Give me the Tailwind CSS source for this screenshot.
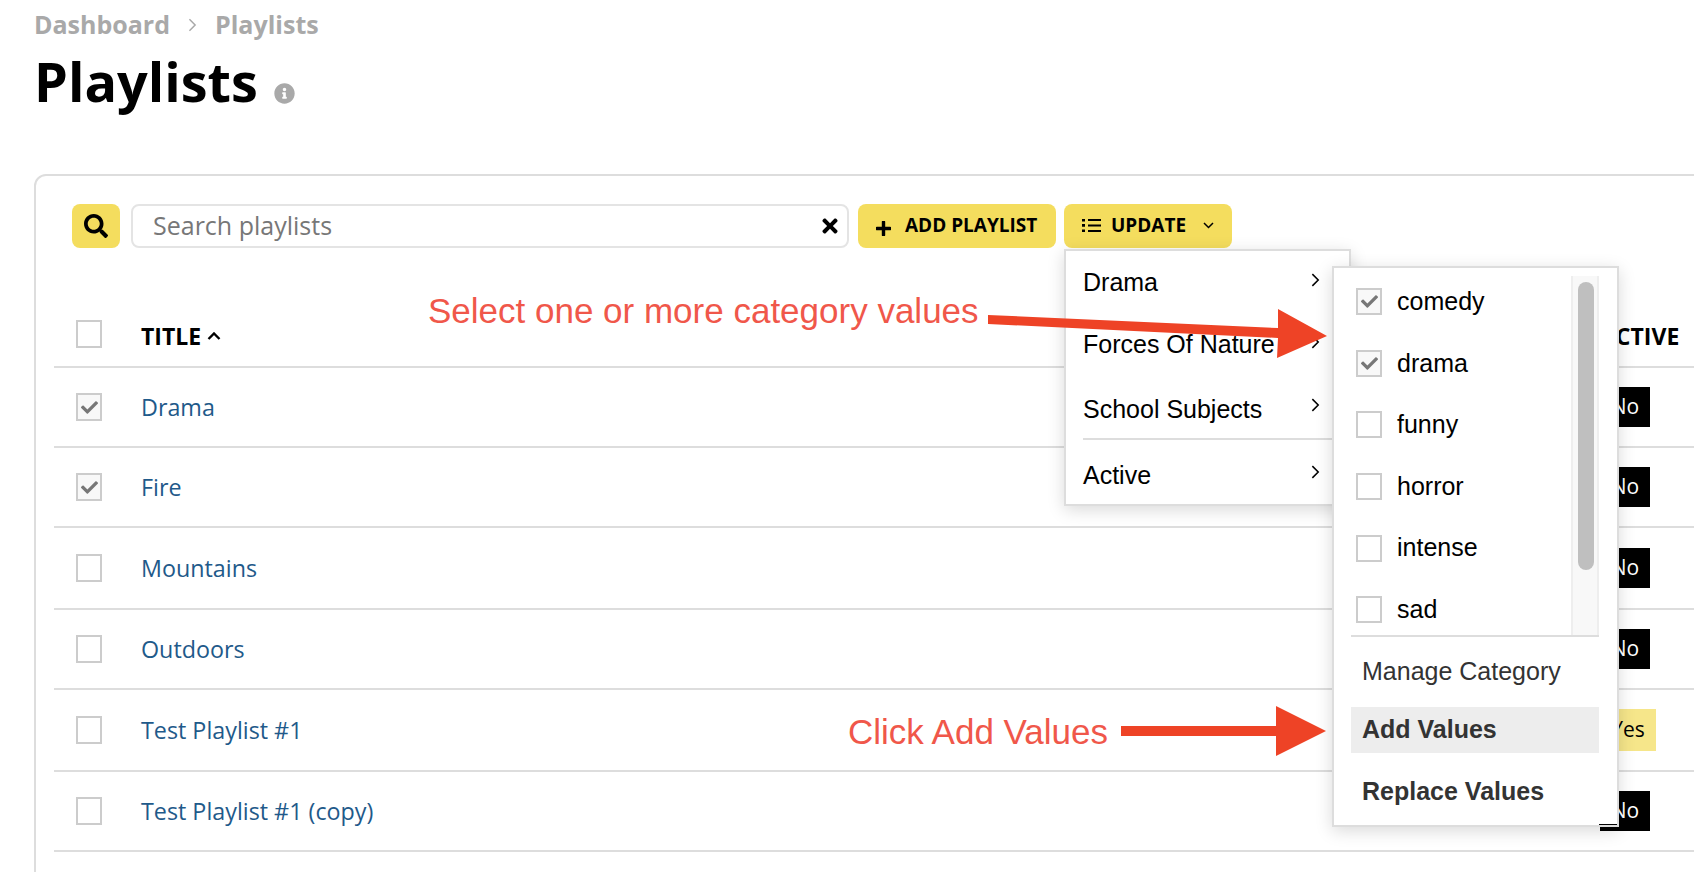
<!DOCTYPE html>
<html lang="en">
<head>
    <meta charset="UTF-8">
    <meta name="viewport" content="width=device-width, initial-scale=1.0">
    <title>Playlists</title>
    <script src="https://cdn.jsdelivr.net/npm/@tailwindcss/browser@4"></script>
</head>
<body class="relative h-[872px] overflow-hidden bg-white font-['Open_Sans',sans-serif] text-black">
    <svg class="hidden">
        <symbol id="check" viewBox="0 0 512 512"><path fill="currentColor" d="M173.898 439.404l-166.4-166.4c-9.997-9.997-9.997-26.206 0-36.204l36.203-36.204c9.997-9.998 26.207-9.998 36.204 0L192 312.69 432.095 72.596c9.997-9.997 26.207-9.997 36.204 0l36.203 36.204c9.997 9.997 9.997 26.206 0 36.204l-294.4 294.401c-9.998 9.997-26.207 9.997-36.204-.001z"/></symbol>
        <symbol id="chev" viewBox="0 0 10 16"><path d="M1.5 1.5 8 8l-6.500 6.500" fill="none" stroke="currentColor" stroke-width="1.700"/></symbol>
    </svg>

    <!-- header -->
    <header class="pl-[34px] pt-[8px]">
        <nav class="flex items-center h-[34px] text-[25px] font-bold text-[#a9a9a9]">
            <span>Dashboard</span>
            <svg class="w-[9px] h-[14px] mx-[18px]"><use href="#chev"/></svg>
            <span>Playlists</span>
        </nav>
        <div class="flex items-center h-[72px] mt-[3px]">
            <h1 class="text-[54px] leading-none font-bold">Playlists</h1>
            <svg class="w-[21px] h-[21px] ml-[16px] mt-[24px] text-[#a9a9a9]" viewBox="0 0 512 512"><path fill="currentColor" d="M256 8C119.043 8 8 119.083 8 256c0 136.997 111.043 248 248 248s248-111.003 248-248C504 119.083 392.957 8 256 8zm0 110c23.196 0 42 18.804 42 42s-18.804 42-42 42-42-18.804-42-42 18.804-42 42-42zm56 254c0 6.627-5.373 12-12 12h-88c-6.627 0-12-5.373-12-12v-24c0-6.627 5.373-12 12-12h12v-64h-12c-6.627 0-12-5.373-12-12v-24c0-6.627 5.373-12 12-12h64c6.627 0 12 5.373 12 12v100h12c6.627 0 12 5.373 12 12v24z"/></svg>
        </div>
    </header>

    <!-- card -->
    <section class="ml-[34px] mt-[57px] w-[1800px] h-[800px] border-2 border-[#dddddd] rounded-[12px] bg-white">
        <div class="flex items-start pl-[36px] pt-[28px] h-[112px]">
            <button class="flex items-center justify-center w-[48px] h-[44px] rounded-[8px] bg-[#f4dd5e]">
                <svg class="w-[24px] h-[24px]" viewBox="0 0 512 512"><path d="M505 442.7L405.3 343c-4.5-4.5-10.6-7-17-7H372c27.6-35.3 44-79.700 44-128C416 93.100 322.900 0 208 0S0 93.100 0 208s93.100 208 208 208c48.300 0 92.700-16.400 128-44v16.300c0 6.400 2.500 12.500 7 17l99.700 99.700c9.400 9.400 24.600 9.400 33.900 0l28.300-28.300c9.400-9.400 9.400-24.600.1-34zM208 336c-70.700 0-128-57.200-128-128 0-70.700 57.200-128 128-128 70.700 0 128 57.200 128 128 0 70.700-57.200 128-128 128z"/></svg>
            </button>
            <div class="relative ml-[11px] w-[718px] h-[44px] rounded-[8px] border-2 border-[#e4e4e4] flex items-center pl-[20px]">
                <input type="text" placeholder="Search playlists" class="w-full outline-none text-[25px] placeholder:text-[#777777]">
                <svg class="absolute right-[8px] top-[9px] w-[18px] h-[22px]" viewBox="0 0 352 512"><path d="M242.720 256l100.070-100.070c12.280-12.280 12.280-32.190 0-44.480l-22.240-22.240c-12.280-12.280-32.190-12.280-44.480 0L176 189.280 75.930 89.210c-12.280-12.280-32.190-12.280-44.480 0L9.210 111.450c-12.280 12.280-12.280 32.190 0 44.480L109.280 256 9.210 356.070c-12.280 12.280-12.280 32.190 0 44.480l22.240 22.240c12.280 12.280 32.200 12.280 44.480 0L176 322.720l100.070 100.070c12.280 12.280 32.200 12.280 44.480 0l22.240-22.240c12.280-12.280 12.280-32.190 0-44.480L242.720 256z"/></svg>
            </div>
            <button class="flex items-center ml-[9px] w-[198px] h-[44px] rounded-[8px] bg-[#f4dd5e] pl-[18px] pb-[2px] text-[19px] font-bold">
                <svg class="w-[15px] h-[15px] mt-[6px] mr-[14px]" viewBox="0 0 15 15"><path d="M7.500 1v13M1 7.500h13" stroke="currentColor" stroke-width="3.400" stroke-linecap="round"/></svg>
                ADD PLAYLIST
            </button>
            <div class="relative ml-[8px]">
                <button class="flex items-center w-[168px] h-[44px] rounded-[8px] bg-[#f4dd5e] pl-[18px] pb-[2px] text-[19px] font-bold">
                    <svg class="w-[19px] h-[15px] mr-[10px]" viewBox="0 0 19 15"><path d="M6 2h13M6 7.500h13M6 13h13" stroke="currentColor" stroke-width="2"/><path d="M0 1h3v2.500H0zM0 6h3v2.800H0zM0 11.500h3V14H0z"/></svg>
                    UPDATE
                    <svg class="w-[11px] h-[7px] ml-[17px]" viewBox="0 0 11 7"><path d="M1 1l4.500 4.500L10 1" fill="none" stroke="currentColor" stroke-width="1.500"/></svg>
                </button>

                <!-- update menu -->
                <div class="absolute left-0 top-[45px] z-10 w-[287px] h-[257px] border-2 border-[#dddddd] bg-white font-['Liberation_Sans',sans-serif] text-[25px] shadow-[0_4px_16px_rgba(0,0,0,0.15)]">
                    <div class="flex flex-col pl-[17px]">
                        <div class="flex items-center justify-between h-[63px]">Drama<svg class="w-[9px] h-[16px] mr-[29px] -mt-[6px]"><use href="#chev"/></svg></div>
                        <div class="flex items-center justify-between h-[62px]">Forces Of Nature<svg class="w-[9px] h-[16px] mr-[29px] -mt-[6px]"><use href="#chev"/></svg></div>
                        <div class="flex items-center justify-between h-[64px] pt-[6px] border-b-2 border-[#dddddd]">School Subjects<svg class="w-[9px] h-[16px] mr-[29px] -mt-[10px]"><use href="#chev"/></svg></div>
                        <div class="flex items-center justify-between h-[63px] pt-[8px]">Active<svg class="w-[9px] h-[16px] mr-[29px] -mt-[8px]"><use href="#chev"/></svg></div>
                    </div>

                    <!-- category values -->
                    <div class="absolute left-[266px] top-[15px] w-[287px] h-[561px] border-2 border-[#dddddd] bg-white shadow-[0_4px_16px_rgba(0,0,0,0.15)]">
                        <div class="flex h-[361px] mt-[8px] ml-[17px] mr-[18px] border-b-2 border-[#dddddd] overflow-hidden">
                            <div class="flex-1 flex flex-col pl-[5px] -mt-[5px]">
                                <div class="flex items-center h-[61.6px] shrink-0"><span class="flex items-center justify-center w-[26px] h-[27px] border-2 border-[#cccccc] bg-[#f8f8f8] text-[#777777]"><svg class="w-[17px] h-[17px]"><use href="#check"/></svg></span><span class="ml-[15px]">comedy</span></div>
                                <div class="flex items-center h-[61.6px] shrink-0"><span class="flex items-center justify-center w-[26px] h-[27px] border-2 border-[#cccccc] bg-[#f8f8f8] text-[#777777]"><svg class="w-[17px] h-[17px]"><use href="#check"/></svg></span><span class="ml-[15px]">drama</span></div>
                                <div class="flex items-center h-[61.6px] shrink-0"><span class="w-[26px] h-[27px] border-2 border-[#cccccc]"></span><span class="ml-[15px]">funny</span></div>
                                <div class="flex items-center h-[61.6px] shrink-0"><span class="w-[26px] h-[27px] border-2 border-[#cccccc]"></span><span class="ml-[15px]">horror</span></div>
                                <div class="flex items-center h-[61.6px] shrink-0"><span class="w-[26px] h-[27px] border-2 border-[#cccccc]"></span><span class="ml-[15px]">intense</span></div>
                                <div class="flex items-center h-[61.6px] shrink-0"><span class="w-[26px] h-[27px] border-2 border-[#cccccc]"></span><span class="ml-[15px]">sad</span></div>
                            </div>
                            <div class="w-[28px] border-x-2 border-[#eeeeee] bg-[#f8f8f8] pt-[6px] pl-[5px]">
                                <div class="w-[16px] h-[288px] rounded-full bg-[#bfbfbf]"></div>
                            </div>
                        </div>
                        <div class="ml-[17px] mr-[18px] text-[#333333]">
                            <div class="flex items-center h-[70px] pl-[11px]">Manage Category</div>
                            <div class="flex items-center h-[46px] pl-[11px] bg-[#ededed] font-bold">Add Values</div>
                            <div class="flex items-center h-[72px] pt-[6px] pl-[11px] font-bold">Replace Values</div>
                        </div>
                        <div class="absolute right-0 bottom-0 w-[18px] h-px bg-black"></div>
                    </div>
                </div>
            </div>
        </div>

        <!-- table -->
        <div class="ml-[18px] text-[23.3px]">
            <div class="grid grid-cols-[87px_1459px_1fr] items-center h-[80px] pt-[18px] border-b-2 border-[#dddddd] text-[23px] font-bold">
                <span class="ml-[22px] -mt-[4px] w-[26px] h-[28px] border-2 border-[#cccccc]"></span>
                <span class="flex items-center">TITLE<svg class="w-[14px] h-[8px] ml-[6px]" viewBox="0 0 14 8"><path d="M1.500 7 7 1.500 12.500 7" fill="none" stroke="currentColor" stroke-width="2.400"/></svg></span>
                <span>ACTIVE</span>
            </div>
            <div class="grid grid-cols-[87px_1459px_1fr] items-center h-[80px] border-b-2 border-[#dddddd]">
                <span class="flex items-center justify-center ml-[22px] w-[26px] h-[28px] border-2 border-[#cccccc] bg-[#f8f8f8] text-[#777777]"><svg class="w-[17px] h-[17px]"><use href="#check"/></svg></span>
                <a class="text-[#1f5a8a]">Drama</a>
                <span class="flex items-center justify-center w-[50px] h-[40px] bg-black text-white text-[21px]">No</span>
            </div>
            <div class="grid grid-cols-[87px_1459px_1fr] items-center h-[80px] border-b-2 border-[#dddddd]">
                <span class="flex items-center justify-center ml-[22px] w-[26px] h-[28px] border-2 border-[#cccccc] bg-[#f8f8f8] text-[#777777]"><svg class="w-[17px] h-[17px]"><use href="#check"/></svg></span>
                <a class="text-[#1f5a8a]">Fire</a>
                <span class="flex items-center justify-center w-[50px] h-[40px] bg-black text-white text-[21px]">No</span>
            </div>
            <div class="grid grid-cols-[87px_1459px_1fr] items-center h-[82px] border-b-2 border-[#dddddd]">
                <span class="ml-[22px] w-[26px] h-[28px] border-2 border-[#cccccc]"></span>
                <a class="text-[#1f5a8a]">Mountains</a>
                <span class="flex items-center justify-center w-[50px] h-[40px] bg-black text-white text-[21px]">No</span>
            </div>
            <div class="grid grid-cols-[87px_1459px_1fr] items-center h-[80px] border-b-2 border-[#dddddd]">
                <span class="ml-[22px] w-[26px] h-[28px] border-2 border-[#cccccc]"></span>
                <a class="text-[#1f5a8a]">Outdoors</a>
                <span class="flex items-center justify-center w-[50px] h-[40px] bg-black text-white text-[21px]">No</span>
            </div>
            <div class="grid grid-cols-[87px_1459px_1fr] items-center h-[82px] border-b-2 border-[#dddddd]">
                <span class="ml-[22px] w-[26px] h-[28px] border-2 border-[#cccccc]"></span>
                <a class="text-[#1f5a8a]">Test Playlist #1</a>
                <span class="flex items-center justify-center w-[56px] h-[42px] bg-[#f6e68a] text-[21px]">Yes</span>
            </div>
            <div class="grid grid-cols-[87px_1459px_1fr] items-center h-[80px] border-b-2 border-[#dddddd]">
                <span class="ml-[22px] w-[26px] h-[28px] border-2 border-[#cccccc]"></span>
                <a class="text-[#1f5a8a]">Test Playlist #1 (copy)</a>
                <span class="flex items-center justify-center w-[50px] h-[40px] bg-black text-white text-[21px]">No</span>
            </div>
        </div>
    </section>

    <!-- annotations drawn on top of the screenshot -->
    <svg class="absolute left-0 top-0 z-20 pointer-events-none" width="1694" height="872">
        <polygon fill="#ee4326" points="988,315 1278,328 1278,309 1327,336 1277,358 1278,338 988,324"/>
        <polygon fill="#ee4326" points="1121,726 1276,726 1276,706 1326,731 1276,756 1276,736 1121,736"/>
    </svg>
    <span class="absolute left-[428px] top-[290px] z-20 font-['Liberation_Sans',sans-serif] text-[35px] leading-[42px] text-[#f0574a]">Select one or more category values</span>
    <span class="absolute left-[848px] top-[711px] z-20 font-['Liberation_Sans',sans-serif] text-[35px] leading-[42px] text-[#f0574a]">Click Add Values</span>
</body>
</html>
